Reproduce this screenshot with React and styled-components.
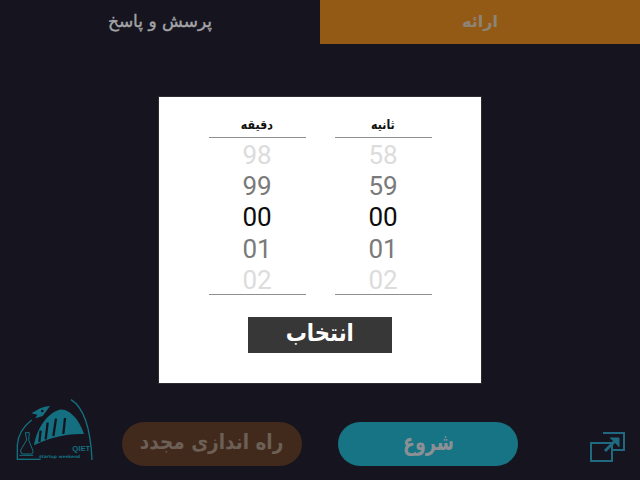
import styled, { createGlobalStyle } from 'styled-components';

const GlobalStyle = createGlobalStyle`
	html, body {
		margin: 0;
		padding: 0;
		background: #16151f;
	}
`;

const Screen = styled.div`
	display: flex;
	flex-direction: column;
	width: 640px;
	height: 480px;
	overflow: hidden;
	background: #16151f;
	font-family: 'DejaVu Sans', sans-serif;
`;

const Tabs = styled.div`
	display: flex;
	height: 44px;
`;

const Tab = styled.div`
	display: flex;
	align-items: center;
	justify-content: center;
	flex: 1;
	padding-bottom: 2px;
	font-size: ${(p) => (p.$active ? 16 : 17)}px;
	font-weight: ${(p) => (p.$active ? 'bold' : 'normal')};
	-webkit-text-stroke: ${(p) => (p.$active ? '0' : '0.4px')};
	color: ${(p) => (p.$active ? '#8d8478' : '#a3a3a6')};
	background: ${(p) => (p.$active ? '#935a16' : 'transparent')};
`;

const Main = styled.div`
	flex: 1;
	padding-top: 52px;
`;

const Dialog = styled.div`
	display: flex;
	flex-direction: column;
	align-items: center;
	box-sizing: border-box;
	width: 324px;
	height: 288px;
	margin: 0 auto;
	padding-top: 17px;
	background: #fff;
	border: 1px solid #2c2c33;
`;

const Pickers = styled.div`
	display: flex;
	gap: 29px;
`;

const Picker = styled.div`
	width: 97px;
	border-bottom: 1px solid #8f8f8f;
`;

const PickerTitle = styled.div`
	height: 23px;
	line-height: 21px;
	text-align: center;
	font-size: 13px;
	font-weight: bold;
	color: #111;
	border-bottom: 1px solid #8f8f8f;
`;

const Squeezed = styled.span`
	display: inline-block;
	transform: scaleX(${(p) => p.$x});
`;

const levels = ['#dcdcdc', '#7a7a7a', '#0c0c0c'];

const Digit = styled.div`
	height: 31.2px;
	line-height: 35px;
	text-align: center;
	font-family: Roboto, sans-serif;
	font-size: 26px;
	color: ${(p) => levels[p.$level]};
`;

const SelectButton = styled.div`
	width: 144px;
	height: 36px;
	margin-top: 22px;
	line-height: 32px;
	text-align: center;
	font-size: 24px;
	font-weight: bold;
	color: #fff;
	background: #373737;
`;

const Footer = styled.div`
	display: flex;
	align-items: flex-end;
	height: 90px;
`;

const Logo = styled.svg`
	display: block;
	width: 120px;
	height: 90px;
`;

const Pills = styled.div`
	display: flex;
	gap: 36px;
	margin-left: 2px;
	padding-bottom: 14px;
`;

const Pill = styled.div`
	width: 180px;
	height: 44px;
	line-height: 40px;
	text-align: center;
	font-weight: bold;
	font-size: ${(p) => (p.$teal ? 23 : 21)}px;
	border-radius: 22px;
	color: ${(p) => (p.$teal ? '#8c9094' : '#6c5f56')};
	background: ${(p) => (p.$teal ? '#177484' : '#412a1c')};
`;

const ExpandIcon = styled.svg`
	display: block;
	width: 65px;
	height: 50px;
	margin-left: 57px;
	margin-bottom: 10px;
`;

const PickerColumn = ({ title, values }) => (
	<Picker>
		<PickerTitle>
			<Squeezed $x={0.85}>{title}</Squeezed>
		</PickerTitle>
		{values.map((value, i) => (
			<Digit key={value} $level={2 - Math.abs(i - 2)}>
				{value}
			</Digit>
		))}
	</Picker>
);

const QuietLogo = () => (
	<Logo viewBox="0 0 360 270">
		<g fill="none" stroke="#147080" strokeWidth="4">
			<path d="M276 210C272 120 255 55 213 29" />
			<path d="M52 210V165C54 135 72 108 95 90" />
			<path d="M52 208H122" />
			<path d="M58 196H100" strokeWidth="3" />
			<path d="M76 128L80 150L62 180Q60 192 70 192H92Q102 192 98 180L86 150L88 128Z" strokeWidth="3" />
		</g>
		<path
			fill="#147080"
			d="M102 166C110 118 138 72 178 59C212 55 240 95 252 132C200 130 150 142 102 166Z"
		/>
		<g stroke="#16151f" strokeWidth="7">
			<path d="M122 122L118 156" />
			<path d="M143 98L137 148" />
			<path d="M168 86L160 138" />
			<path d="M195 84L190 132" />
		</g>
		<path fill="#147080" d="M150 48L128 78L106 85L112 74L94 70L108 62Q126 50 150 48Z" />
		<circle cx="127" cy="63" r="4" fill="#16151f" />
		<text x="217" y="182" fontFamily="'Liberation Sans', sans-serif" fontWeight="bold" fontSize="23" fill="#147080">
			QIET
		</text>
		<text x="117" y="203" fontFamily="'DejaVu Sans', sans-serif" fontWeight="bold" fontSize="13" fill="#147080">
			startup weekend
		</text>
	</Logo>
);

export default function App() {
	return (
		<Screen>
			<GlobalStyle />
			<Tabs>
				<Tab>پرسش و پاسخ</Tab>
				<Tab $active>ارائه</Tab>
			</Tabs>
			<Main>
				<Dialog>
					<Pickers>
						<PickerColumn title="دقیقه" values={['98', '99', '00', '01', '02']} />
						<PickerColumn title="ثانیه" values={['58', '59', '00', '01', '02']} />
					</Pickers>
					<SelectButton>
						<Squeezed $x={0.88}>انتخاب</Squeezed>
					</SelectButton>
				</Dialog>
			</Main>
			<Footer>
				<QuietLogo />
				<Pills>
					<Pill>
						<Squeezed $x={0.88}>راه اندازی مجدد</Squeezed>
					</Pill>
					<Pill $teal>
						<Squeezed $x={0.76}>شروع</Squeezed>
					</Pill>
				</Pills>
				<ExpandIcon viewBox="0 0 65 50" fill="none" stroke="#1f6a80" strokeWidth="2">
					<path d="M28 13H49V30H38" />
					<rect x="16" y="23" width="21" height="18" />
					<path d="M30 31L42 19" strokeWidth="3" />
					<path d="M35 18H44V27" fill="#1f6a80" strokeWidth="1" />
				</ExpandIcon>
			</Footer>
		</Screen>
	);
}
